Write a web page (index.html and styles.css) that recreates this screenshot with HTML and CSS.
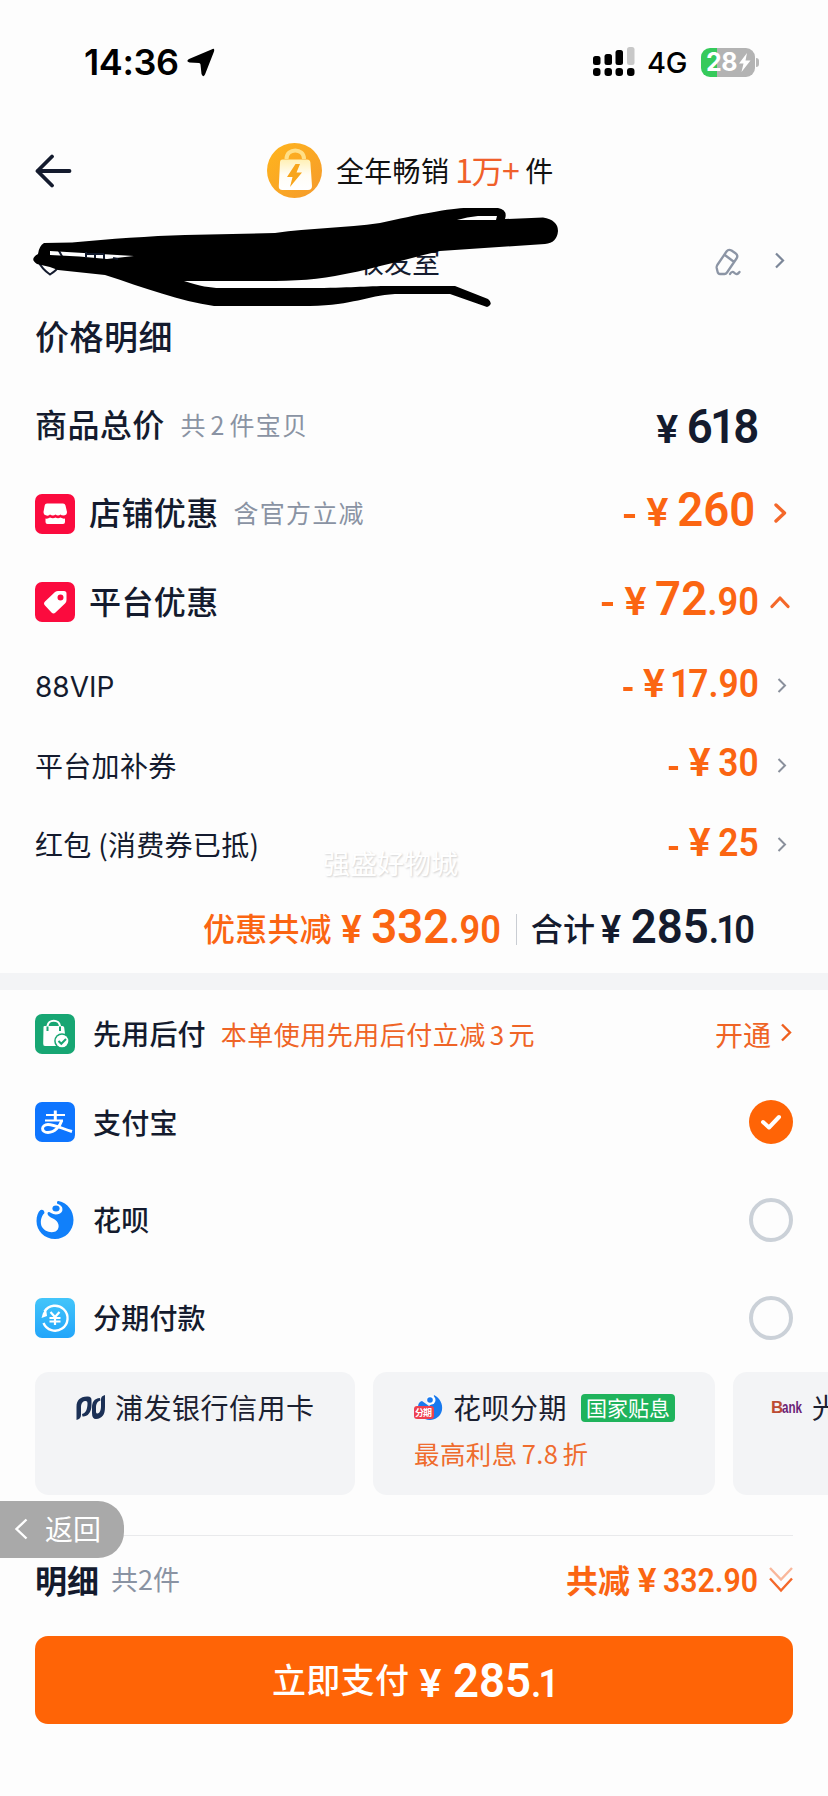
FILE: index.html
```html
<!DOCTYPE html>
<html lang="zh-CN">
<head>
<meta charset="utf-8">
<title>价格明细</title>
<link rel="stylesheet" href="styles.css">
</head>
<body>
<main class="page">
  <header class="status">
    <div class="status-left">
      <span class="clock">14:36</span>
      <svg width="28" height="29" viewBox="0 0 28 29"><path d="M24.500 1.500Q28 -.5 27 3.500L18 26.500Q16 30 14.500 26L13.500 16.500Q13.300 15 12 15L2.500 14.500Q-1.500 13.500 2 11Z" fill="#000"/></svg>
    </div>
    <div class="status-right">
      <svg width="42" height="30" viewBox="0 0 42 30"><g fill="#000"><rect x="0" y="9" width="7.500" height="9" rx="2.500"/><rect x="11.500" y="7" width="7.500" height="11" rx="2.500"/><rect x="22.500" y="3" width="7.500" height="15" rx="2.500"/><rect x="0" y="21" width="7.500" height="8" rx="3"/><rect x="11.500" y="21" width="7.500" height="8" rx="3"/><rect x="22.500" y="21" width="7.500" height="8" rx="3"/><rect x="34" y="21" width="7.500" height="8" rx="3"/></g><rect x="34" y="0" width="7.500" height="18" rx="2.500" fill="#c8c8c8"/></svg>
      <span class="network">4G</span>
      <span class="battery"><b>28</b><svg width="13" height="21" viewBox="0 0 13 21"><path d="M9 1 1 11.500H5.500L3.500 20 12.500 8.500H7.500Z" fill="#fff"/></svg></span>
      <i class="battery-tip"></i>
    </div>
  </header>

  <div class="header">
    <svg class="back" width="37" height="34" viewBox="0 0 37 34" fill="none" stroke="#141b2e" stroke-width="3.800" stroke-linecap="round" stroke-linejoin="round"><path d="M34.500 17H2.500M17 2.500 2.500 17 17 31.500"/></svg>
    <svg class="medal" width="55" height="55" viewBox="0 0 55 55"><defs><linearGradient id="gold" x1="0" y1="0" x2="1" y2="1"><stop offset="0" stop-color="#ffb51c"/><stop offset="1" stop-color="#f59a2c"/></linearGradient><linearGradient id="cream" x1="0" y1="0" x2="0" y2="1"><stop offset="0" stop-color="#fff0b4"/><stop offset=".5" stop-color="#fffdf6"/><stop offset="1" stop-color="#fff"/></linearGradient></defs><circle cx="27.500" cy="27.500" r="27.500" fill="url(#gold)"/><path d="M19.500 16C19.500 4.500 37 4.500 37 16" fill="none" stroke="#ffdf87" stroke-width="4"/><path d="M15.500 16.500H40Q43 16.500 43.400 19.500L45 43Q45 47 41 47H15.500Q11.500 47 11.800 43L13 19.500Q13 16.500 15.500 16.500Z" fill="url(#cream)"/><path d="M28.500 21 20 34H25.500L23 44 35 29.500H29.500L33 21Z" fill="#f8a51b"/></svg>
    <span class="sales">全年畅销</span><span class="sales-count">1万+</span><span class="sales unit">件</span>
  </div>

  <div class="address">
    <span class="place">收发室</span>
    <svg class="pencil" width="26" height="28" viewBox="0 0 26 28" fill="none" stroke="#8c95a5" stroke-width="2.300" stroke-linejoin="round" stroke-linecap="round"><path d="M2.300 17 11.500 3.500Q13.500 .8 16.500 2.500L20.500 5.300Q23.500 7.500 21.500 10.500L12 24.500Q11 26 9.500 26H5Q3 26 2.500 23.500L1.700 20Q1.400 18.500 2.300 17ZM10.500 7.500 18.500 13.500M15 26Q17 22.500 19.500 25T24.500 24"/></svg>
    <svg width="10" height="17" viewBox="0 0 10 17" fill="none" stroke="#7c8799" stroke-width="2.200"><path d="M1 1.500 8 8.500 1 15.500"/></svg>
    <svg class="scribble" width="828" height="130" viewBox="0 0 828 130">
      <path d="M38 61Q42 69 50 74.500Q57 70 59 66M58 49 64 60" fill="none" stroke="#141b2e" stroke-width="2"/>
      <path fill-rule="evenodd" d="M44 43 72 42.500C110 39 150 36 185 35L275 33C310 28 345 28 380 23C420 14 455 7 470 8H498Q508 10 505 19L543 17.500Q558 20 558 31Q557 43 545 44L440 51C405 59 370 70 335 76C310 81 280 81 250 81H184C200 86 210 88 220 88H310C350 88 365 86 390 86H455L488 99Q494 104 487 107L450 94H395C365 96 355 105 310 106H214C180 101 145 88 105 75L58 70Q48 66 37 64Q29 59 38 54Q39 46 44 43ZM50 51V55Q80 56 107 59L134 56ZM457 20 496 20 497 16H478Q467 17 457 20Z"/>
      <path d="M86 52V58M95 53V58M104 54V59M86 54H104M113 58 118 59" stroke="#10182a" stroke-width="2"/>
    </svg>
  </div>

  <h1 class="title">价格明细</h1>

  <section class="prices">
    <div class="row">
      <span class="label">商品总价</span><span class="note n1">共 2 件宝贝</span>
      <span class="price dark big"><i class="yen">¥</i><b>6<em>1</em>8</b></span><span class="slot"></span>
    </div>
    <div class="row up">
      <svg class="tile" width="40" height="40" viewBox="0 0 40 40"><rect width="40" height="40" rx="7" fill="#fb0b3e"/><path d="M12 9.500H28Q30 9.500 30.500 11.500L32 18Q32 21 29 21.500Q26 21.500 25.500 20.500Q23 22.500 20.500 20.500Q18 22.500 15 20.500Q14 22 11.500 21.500Q8.500 21 8.500 18L9.700 11.500Q10 9.500 12 9.500ZM10.500 24.500Q13 25 15 23.500Q18 25 20.500 23.500Q23 25 25.500 23.500Q28 25 30 24.500V28Q30 30 28 30H12.500Q10.500 30 10.500 28Z" fill="#fff"/></svg>
      <span class="label">店铺优惠</span><span class="note n2">含官方立减</span>
      <span class="price big inset"><i class="minus"></i><i class="yen">¥</i><b>260</b></span>
      <span class="slot"><svg width="14" height="20" viewBox="0 0 14 20" fill="none" stroke="#f4682a" stroke-width="3.400" stroke-linecap="round" stroke-linejoin="round"><path d="M3 2 11.500 10 3 18"/></svg></span>
    </div>
    <div class="row up">
      <svg class="tile" width="40" height="40" viewBox="0 0 40 40"><rect width="40" height="40" rx="7" fill="#fb0b3e"/><path fill-rule="evenodd" d="M20 10Q21.500 9 23 9H29Q31.500 9 31.500 11.500V18Q31.500 20 30 21.500L20.500 30.500Q18.500 32.500 16.500 30.500L10 23.500Q8 21.500 10 19.500ZM25.500 12.500A3 3 0 1 0 25.500 18.500 3 3 0 1 0 25.500 12.500Z" fill="#fff"/></svg>
      <span class="label">平台优惠</span>
      <span class="price big"><i class="minus"></i><i class="yen">¥</i><b>72</b><b class="cents">.90</b></span>
      <span class="slot"><svg width="20" height="14" viewBox="0 0 20 14" fill="none" stroke="#f4682a" stroke-width="3.200" stroke-linecap="round" stroke-linejoin="round"><path d="M2 11.500 10 3 18 11.500"/></svg></span>
    </div>
    <div class="row sub">
      <span class="label latin">88VIP</span>
      <span class="price small"><i class="minus"></i><i class="yen">¥</i><b><em>1</em>7.90</b></span>
      <span class="slot"><svg width="10" height="15" viewBox="0 0 10 15" fill="none" stroke="#8a909c" stroke-width="2"><path d="M1.500 1 8 7.500 1.500 14"/></svg></span>
    </div>
    <div class="row sub">
      <span class="label">平台加补券</span>
      <span class="price small"><i class="minus"></i><i class="yen">¥</i><b>30</b></span>
      <span class="slot"><svg width="10" height="15" viewBox="0 0 10 15" fill="none" stroke="#8a909c" stroke-width="2"><path d="M1.500 1 8 7.500 1.500 14"/></svg></span>
    </div>
    <div class="row sub">
      <span class="label">红包 (消费券已抵)</span>
      <span class="price small"><i class="minus"></i><i class="yen">¥</i><b>25</b></span>
      <span class="slot"><svg width="10" height="15" viewBox="0 0 10 15" fill="none" stroke="#8a909c" stroke-width="2"><path d="M1.500 1 8 7.500 1.500 14"/></svg></span>
      <span class="watermark">强盛好物城</span>
    </div>
    <div class="row total">
      <span class="total-text">优惠共减</span>
      <span class="price big saved"><i class="yen">¥</i><b>332</b><b class="cents">.90</b></span>
      <i class="bar"></i>
      <span class="total-text dark">合计</span>
      <span class="price big dark sum"><i class="yen">¥</i><b>285</b><b class="cents">.<em>1</em>0</b></span>
    </div>
  </section>

  <section class="pay">
    <div class="method">
      <svg class="tile" width="40" height="40" viewBox="0 0 40 40"><rect width="40" height="40" rx="7" fill="#17a673"/><path d="M9.500 12H27.500Q29 12 29.200 13.500L30 20V32H10Q8 32 8.200 29.500L8.500 13Q8.500 12 9.500 12Z" fill="#fff"/><path d="M12.500 17V12.500M25 17V12.500" fill="none" stroke="#17a673" stroke-width="2"/><path d="M12.500 12C13 5 24.500 5 25 12" fill="none" stroke="#fff" stroke-width="2.200"/><circle cx="27" cy="27" r="7.800" fill="#17a673"/><circle cx="27" cy="27" r="6.300" fill="#fff"/><path d="M23.500 27 26.300 29.800 31 25" fill="none" stroke="#17a673" stroke-width="2"/></svg>
      <span class="name">先用后付</span><span class="promo">本单使用先用后付立减 3 元</span>
      <span class="open">开通</span>
      <svg class="open-arrow" width="12" height="19" viewBox="0 0 12 19" fill="none" stroke="#ef5f1e" stroke-width="2.400"><path d="M2 1.500 10 9.500 2 17.500"/></svg>
    </div>
    <div class="method m2">
      <svg class="tile" width="40" height="40" viewBox="0 0 40 40"><rect width="40" height="40" rx="7" fill="#0e75ff"/><g fill="none" stroke="#fff"><path d="M11 13H30M10 18.500H28" stroke-width="2.200"/><path d="M20.300 8.500V18" stroke-width="3"/><path d="M26.800 18.500C25 24 20 30.500 13 30.500 5.500 30.500 6 22.500 13 22.500 19 22.500 27 26.500 37 29.500" stroke-width="2.900"/></g></svg>
      <span class="name">支付宝</span>
      <span class="radio on"><svg width="22" height="17" viewBox="0 0 22 17" fill="none" stroke="#fff" stroke-width="4" stroke-linecap="round" stroke-linejoin="round"><path d="M3 8 9 13.500 19 3"/></svg></span>
    </div>
    <div class="method tall">
      <svg class="tile" width="40" height="40" viewBox="0 0 40 40"><path d="M23.500 1C33 3 38.500 11 38.500 20 38.500 31 30 39 20 39 9.500 39 1.500 31 1.500 21 1.500 16 3 12 5.500 10Q9 9 9.500 13C5.500 17 5 23 7 27 9.500 31 15 33.500 20.500 31.500 24.500 29.500 24.500 24 21.500 21 19 18 12 17 12.500 13Q13.500 11 16 13 20 15.500 25 13.500 28.500 11.500 27 7 25.500 4.500 22 3.500 21.500 .5 23.500 1Z" fill="#1180fa"/><ellipse cx="21" cy="8.500" rx="3.600" ry="2.900" fill="#1180fa"/></svg>
      <span class="name">花呗</span><span class="radio"></span>
    </div>
    <div class="method tall">
      <svg class="tile" width="40" height="40" viewBox="0 0 40 40"><defs><linearGradient id="sky" x1="0" y1="0" x2="0" y2="1"><stop offset="0" stop-color="#43c5fa"/><stop offset="1" stop-color="#22a5fa"/></linearGradient></defs><rect width="40" height="40" rx="7" fill="url(#sky)"/><path d="M8.500 25A12.500 12.500 0 1 0 9.500 13.500" fill="none" stroke="#fff" stroke-width="2.400"/><path d="M11 10.500 12 18 6.500 20 8 15Z" fill="#fff"/><path d="M15.500 14 20 19 24.500 14M14.500 20H25.500M14.500 23.500H25.500M20 19V27" fill="none" stroke="#fff" stroke-width="2.200"/></svg>
      <span class="name">分期付款</span><span class="radio"></span>
    </div>

    <div class="cards">
      <div class="card c1">
        <div class="card-line">
          <svg width="30" height="26" viewBox="0 0 30 26" fill="#1b3056"><path d="M.5 25V12C.5 5 4 2 11 1.500Q15.500 1 15.500 5V10C15.500 18 11 22 6.500 21.500L6 19C10 18 11.500 14 11.500 8Q11.500 5.500 9 6C6 6.500 5 9 5 13V20Q5 24 .5 25ZM16 18V13C16 7 18 3.500 24 3L24.500 5.500C21 6.500 20 9 20 13V17Q20 18.500 21.500 18.500C24 18 25 15 25 11V4Q25 1 29 0V12C29 20 26 23.500 20 24Q16 24 16 18Z"/></svg>
          <span>浦发银行信用卡</span>
        </div>
      </div>
      <div class="card c2">
        <div class="card-line">
          <svg width="30" height="28" viewBox="0 0 30 28"><path d="M20 1C26 4 29 10 28 16 26.500 24 18 28 11 25L4 13Q4 8 8 7L15 12 19 9Z" fill="#1879ee"/><circle cx="17" cy="6" r="4.500" fill="#fff"/><circle cx="16" cy="6" r="2.800" fill="#1879ee"/><rect x="0" y="12" width="20" height="13" rx="3" fill="#ee4050"/><text class="mini" x="1" y="22" textLength="17">分期</text></svg>
          <span>花呗分期</span><span class="badge">国家贴息</span>
        </div>
        <div class="rate">最高利息 7.8 折</div>
      </div>
      <div class="card c3">
        <div class="card-line">
          <svg width="32" height="24" viewBox="0 0 32 24"><text class="bank-b" x="0" y="17">B</text><text class="bank" x="11" y="17" textLength="20" lengthAdjust="spacingAndGlyphs">ank</text></svg>
          <span>光</span>
        </div>
      </div>
    </div>
  </section>

  <div class="gap"><div class="return"><svg width="15" height="22" viewBox="0 0 15 22" fill="none" stroke="#fff" stroke-width="2.400"><path d="M12.500 1.500 2.500 11 12.500 20.500"/></svg><span>返回</span></div></div>

  <footer>
    <div class="summary">
      <span class="detail">明细</span><span class="count">共2件</span>
      <span class="cut">共减</span>
      <span class="price tiny"><i class="yen">¥</i><b>332.90</b></span>
      <svg class="down" width="26" height="27" viewBox="0 0 26 27" fill="none" stroke-width="2.400"><path d="M2 2 13 13.500 24 2" stroke="#f9b79b"/><path d="M2 12.500 13 24.500 24 12.500" stroke="#f4682a"/></svg>
    </div>
    <button class="pay-button"><span>立即支付</span><span class="price big"><i class="yen">¥</i><b>285</b><b class="cents">.<em>1</em></b></span></button>
  </footer>
</main>
</body>
</html>
```
FILE: styles.css
```css
* { box-sizing: border-box; }
body { margin: 0; background: #fdfdfd; }
i, em { font-style: normal; }
svg { display: block; flex: none; }
.page {
  width: 828px; height: 1796px; overflow: hidden; background: #fdfdfd; color: #141b2e;
  font-family: "Noto Sans CJK SC", sans-serif; line-height: 1; white-space: nowrap;
}

.status { height: 110px; padding: 14px 69px 0 84px; display: flex; align-items: center; justify-content: space-between; color: #000; }
.status-left, .status-right { display: flex; align-items: center; }
.clock { font: 600 36px/1 Inter, sans-serif; width: 103px; letter-spacing: -.4px; }
.network { font: 500 29px/1 Inter, sans-serif; margin-left: 12px; width: 54px; letter-spacing: -.3px; }
.battery {
  display: flex; align-items: center; width: 54px; height: 29px; padding-left: 5px; border-radius: 9px;
  background: linear-gradient(90deg, #35ca5b 29%, #b3b3b3 29%); color: #fff;
}
.battery b { font: 700 25px/1 Inter, sans-serif; letter-spacing: -.6px; width: 32px; }
.battery-tip { width: 3px; height: 9px; margin-left: 1px; border-radius: 0 4px 4px 0; background: #b8b8b8; }

.header { height: 122px; display: flex; align-items: center; padding-left: 35px; }
.medal { margin-left: 195px; margin-top: -2px; }
.sales { margin-left: 14px; font-size: 28px; color: #111; letter-spacing: .3px; padding-bottom: 2px; }
.sales-count { margin-left: 6px; width: 63px; font-size: 32px; color: #f0602a; letter-spacing: -1.500px; padding-bottom: 4px; }
.sales.unit { margin-left: 7px; }

.address { position: relative; height: 60px; display: flex; align-items: center; padding-left: 356px; }
.place { font-size: 28px; padding-bottom: 3px; }
.pencil { margin-left: auto; margin-right: 34px; margin-top: -1px; }
.address > svg:nth-of-type(2) { margin-right: 43px; margin-top: -3px; }
.scribble { position: absolute; left: 0; top: -32px; }
.title { margin: 0; height: 90px; line-height: 87px; padding-left: 35px; font-size: 34px; font-weight: 500; letter-spacing: .5px; }

.row { position: relative; display: flex; align-items: center; height: 88px; padding-left: 35px; }
.row.up { height: 88.500px; }
.row .label { font-size: 32px; font-weight: 500; padding-bottom: 6px; letter-spacing: .4px; }
.tile { margin-top: -1px; }
.tile + .label { margin-left: 14px; }
.note { color: #8a93a3; font-size: 25px; letter-spacing: 1.200px; padding-bottom: 4px; }
.n1 { margin-left: 16px; word-spacing: -3px; }
.n2 { margin-left: 15px; }
.row.sub { height: 79.600px; }
.row.sub .label { font-size: 28px; font-weight: 400; padding-bottom: 3px; letter-spacing: .3px; }
.row.sub .label.latin { font-family: Inter, sans-serif; font-size: 28px; padding-bottom: 0; letter-spacing: 0; }
.slot { width: 69px; padding-left: 3px; display: flex; justify-content: center; padding-right: 30px; }
.up .slot { padding-bottom: 2px; }
.sub .slot { padding-left: 4px; padding-right: 28px; padding-bottom: 2px; }

.price {
  margin-left: auto; display: flex; align-items: baseline; transform: scaleX(.93); transform-origin: right center;
  font-family: Roboto, sans-serif; font-weight: 600; color: #fb6512;
}
.price b { font-weight: 600; }
.price .yen { display: inline-block; transform: scaleX(1.16); }
.price.dark, .dark { color: #141b2e; }
.big { font-size: 49px; }
.big .yen { font-size: 38px; margin-right: 11px; }
.big .cents { font-size: 39px; }
.big em { margin: 0 -3px; }
.inset { margin-right: 4px; }
.inset + .slot { margin-left: -4px; width: 73px; padding-left: 7px; }
.small { font-size: 38px; padding-bottom: 6px; }
.small .yen { margin-right: 10px; }
.small em { margin: 0 -2px 0 -3px; }
.minus { width: 12px; height: 4px; margin-right: 14px; background: currentColor; align-self: center; position: relative; top: 6px; }
.small .minus { width: 10px; margin-right: 13px; top: 5px; }
.up .price { padding-bottom: 9px; }

.watermark { position: absolute; left: 323px; top: 43px; font-size: 27px; color: #fff; text-shadow: 1px 1px 2px #d2d2d2; }
.row.total { height: 87.200px; padding-left: 203px; }
.total-text { font-size: 32px; font-weight: 500; color: #fb6512; padding-bottom: 4px; letter-spacing: .2px; }
.total-text.dark { color: #141b2e; margin-left: 14px; }
.total .price { padding-bottom: 6px; margin-left: 0; width: 169px; justify-content: flex-end; }
.total .price .yen { transform: scaleX(1.08); }
.total .sum { width: 160px; }
.bar { width: 1px; height: 31px; margin-left: 15px; background: #c9cdd3; }

.pay { border-top: 17px solid #f3f4f6; }
.method { display: flex; align-items: center; height: 88px; padding: 0 35px; }
.method .tile { margin-top: 0; }
.method.m2 { height: 93px; padding-bottom: 4px; }
.method.tall { height: 98px; }
.name { margin-left: 18px; font-size: 28px; font-weight: 500; padding-bottom: 1px; letter-spacing: .2px; }
.promo { margin-left: 15px; font-size: 26px; color: #ef6426; letter-spacing: .5px; word-spacing: -2.500px; }
.open { margin-left: auto; font-size: 28px; color: #ef6426; }
.open-arrow { margin-left: 9px; margin-right: 1px; margin-top: -2px; }
.radio { margin-left: auto; width: 44px; height: 44px; border: 4px solid #cbd1d8; border-radius: 50%; }
.radio.on { border: 0; background: #ff6406; display: flex; align-items: center; justify-content: center; }
.cards { display: flex; gap: 18px; margin: 5px 0 0 35px; overflow: hidden; }
.card { flex: none; height: 123px; border-radius: 14px; background: #f3f4f6; padding-top: 20px; color: #1b2030; }
.c1 { width: 320px; padding-left: 41px; }
.c2 { width: 342px; padding-left: 41px; }
.c3 { width: 320px; padding-left: 38px; }
.card-line { display: flex; align-items: center; height: 32px; font-size: 28px; }
.card-line > span:first-of-type { margin-left: 9px; padding-bottom: 2px; letter-spacing: .5px; }
.card .badge { margin-left: 14px; height: 28px; line-height: 26px; padding: 0 5px; border-radius: 4px; background: #1fb35c; color: #fff; font-size: 21px; }
.rate { margin-top: 15px; font-size: 25.500px; line-height: 28px; color: #ef6c2e; letter-spacing: .4px; word-spacing: -2px; }
.mini { font-size: 9px; font-weight: 700; fill: #fff; }
.bank-b { font: 700 17px "Liberation Sans", sans-serif; fill: #bc4c33; }
.bank { font: 700 16px "Liberation Sans", sans-serif; fill: #6a2277; }

.gap { height: 41px; position: relative; margin-right: 35px; border-bottom: 1px solid #e9eaec; }
.return {
  position: absolute; left: 0; top: 6px; width: 124px; height: 57px; display: flex; align-items: center; padding-left: 14px;
  border-radius: 0 26px 26px 0; background: #a9a9a9; color: #fff; font-size: 28px;
}
.return span { margin-left: 16px; padding-bottom: 2px; }
.summary { display: flex; align-items: center; height: 88px; padding: 0 34px 0 35px; }
.detail { font-size: 32px; font-weight: 700; padding-bottom: 2px; }
.count { margin-left: 12px; font-size: 27px; color: #8a93a3; padding-bottom: 2px; }
.cut { margin-left: auto; font-size: 32px; font-weight: 700; color: #fb6512; padding-bottom: 1px; }
.price.tiny { margin-left: 0; width: 128px; justify-content: flex-end; font-size: 32.500px; padding-top: 3px; }
.tiny .yen { margin-right: 9px; }
.down { margin-left: 10px; }
.pay-button {
  display: flex; align-items: center; width: 758px; height: 88px; margin: 12px 0 0 35px; padding: 0 0 0 237px;
  border: 0; border-radius: 13px; background: #ff6406; color: #fff; font: 500 34px/1 "Noto Sans CJK SC", sans-serif;
}
.pay-button > span:first-child { padding-bottom: 2px; letter-spacing: .3px; }
.pay-button .price { color: #fff; margin-left: 12px; transform-origin: left center; padding-top: 2px; }
.pay-button .yen { margin-right: 14px; }
```
